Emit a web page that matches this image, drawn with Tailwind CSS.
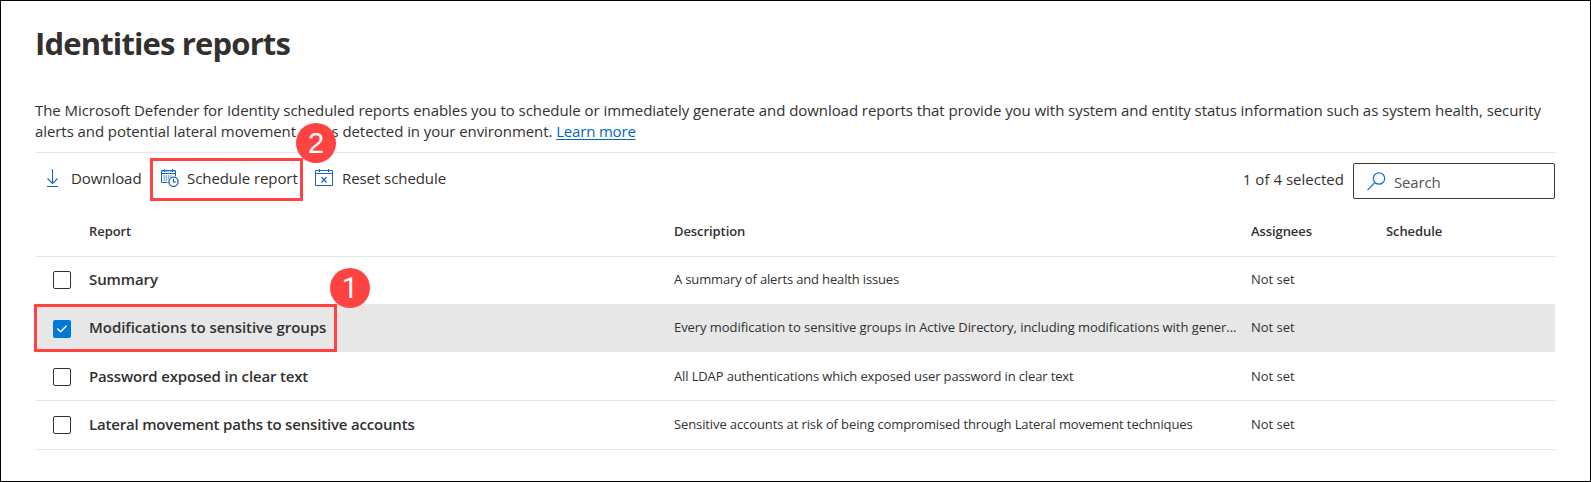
<!DOCTYPE html>
<html lang="en">
<head>
<meta charset="utf-8">
<title>Identities reports</title>
<script src="https://cdn.jsdelivr.net/npm/@tailwindcss/browser@4"></script>
</head>
<body class="bg-white">
<main class="relative h-[482px] w-[1591px] overflow-hidden border border-black bg-white pl-[34px] pr-[35px] font-['Open_Sans','Segoe_UI',sans-serif] text-[15px] text-[#323130]">
  <h1 class="pt-[21px] text-[31px] leading-[42px] font-bold tracking-[-0.85px] whitespace-nowrap">Identities reports</h1>
  <div class="pt-[36px] leading-[21px] whitespace-nowrap">
    <p class="tracking-[-0.058px]">The Microsoft Defender for Identity scheduled reports enables you to schedule or immediately generate and download reports that provide you with system and entity status information such as system health, security</p>
    <p class="tracking-[-0.075px]">alerts and potential lateral movement paths detected in your environment. <a class="tracking-[-0.18px] text-[#0067b8] underline underline-offset-2" href="#">Learn more</a></p>
  </div>

  <div class="mt-[10px] flex h-[63px] border-t border-[#e6e6e6] leading-[20px] tracking-[-0.07px] whitespace-nowrap">
    <button class="flex h-[20px] w-[116px] mt-[15px] items-center pl-[12px]">
      <svg class="h-[18px] w-[12px]" viewBox="0 0 12 18" fill="none" stroke="#1668bd" stroke-width="1.1"><path d="M5.5 0v14.5M.5 9.5l5 5 5-5"/><path d="M0 17.5h11" stroke-width="1"/></svg>
      <span class="ml-[12px]">Download</span>
    </button>
    <button class="flex h-[20px] w-[153px] mt-[15px] items-center pl-[10px]">
      <svg class="h-[18px] w-[18px]" viewBox="0 0 18 18" fill="none" stroke="#1f66b8" stroke-width="1"><path d="M6.5 13.5h-6v-12h14v6M.5 4.5h14M3.5 0v3M11.5 0v3"/><path d="M1 2.5h13" stroke-opacity=".4"/><path d="M2.5 7h9M2.5 9h6M2.5 11h4.500" stroke-dasharray="1.4 .8"/><circle cx="12.500" cy="12.800" r="4.600" fill="#fff" stroke-width="1.300"/><path d="M12.500 9.800v3.200h2.600" stroke-width="1.200"/></svg>
      <span class="ml-[8px]">Schedule report</span>
    </button>
    <button class="flex h-[20px] mt-[15px] items-center pl-[11px]">
      <svg class="h-[18px] w-[19px]" viewBox="0 0 19 18" fill="none" stroke="#1f66b8" stroke-width="1"><path d="M.5 1.500h17v15H.5zM.5 4.500h17M4.500 0v3M13.500 0v3"/><path d="M6.500 8l5 5.500M11.500 8l-5 5.500" stroke-width="1.200"/></svg>
      <span class="ml-[8px]">Reset schedule</span>
    </button>
    <span class="mt-[16px] ml-auto h-[20px] tracking-[0.02px]">1 of 4 selected</span>
    <div class="mt-[10px] ml-[9px] flex h-[36px] w-[202px] items-center rounded-[2px] border border-[#3b3a39] pl-[13px] text-[#555351]">
      <svg class="h-[19px] w-[19px]" viewBox="0 0 19 19" fill="none" stroke="#1573d1" stroke-width="1.200"><circle cx="12" cy="6.500" r="5.700"/><path d="M8 10.500l-7.500 7.700"/></svg>
      <span class="mt-[2px] ml-[8px] tracking-[-0.15px]">Search</span>
    </div>
  </div>

  <div class="text-[13px] whitespace-nowrap">
    <div class="flex h-[42px] border-b border-[#e6e6e6] pl-[54px] leading-[32px] font-semibold tracking-[-0.08px]">
      <span class="w-[585px]">Report</span><span class="w-[577px]">Description</span><span class="w-[135px]">Assignees</span><span>Schedule</span>
    </div>
    <div class="flex h-[48px] border-b border-[#e6e6e6] pl-[18px] leading-[45px]">
      <span class="mt-[14px] h-[18px] w-[18px] rounded-[2px] border border-[#323130]"></span>
      <span class="ml-[18px] w-[585px] text-[15px] font-semibold tracking-[-0.1px]">Summary</span><span class="w-[577px] tracking-[-0.15px]">A summary of alerts and health issues</span><span>Not set</span>
    </div>
    <div class="flex h-[47px] bg-[#e7e7e7] pl-[18px] leading-[45px]">
      <span class="mt-[15px] h-[18px] w-[18px] rounded-[2px] bg-[#0078d7]"><svg class="h-[18px] w-[18px]" viewBox="0 0 18 18" fill="none" stroke="#fff" stroke-width="1.500"><path d="M4.300 8.500l3.200 3.200 6-6"/></svg></span>
      <span class="ml-[18px] w-[585px] text-[15px] font-semibold tracking-[-0.05px]">Modifications to sensitive groups</span><span class="w-[577px] tracking-[-0.06px]">Every modification to sensitive groups in Active Directory, including modifications with gener...</span><span>Not set</span>
    </div>
    <div class="flex h-[49px] border-b border-[#e6e6e6] pl-[18px] leading-[48px]">
      <span class="mt-[16px] h-[18px] w-[18px] rounded-[2px] border border-[#323130]"></span>
      <span class="ml-[18px] w-[585px] text-[15px] font-semibold tracking-[-0.16px]">Password exposed in clear text</span><span class="w-[577px] tracking-[-0.13px]">All LDAP authentications which exposed user password in clear text</span><span>Not set</span>
    </div>
    <div class="flex h-[49px] border-b border-[#e6e6e6] pl-[18px] leading-[46px]">
      <span class="mt-[15px] h-[18px] w-[18px] rounded-[2px] border border-[#323130]"></span>
      <span class="ml-[18px] w-[585px] text-[15px] font-semibold tracking-[-0.18px]">Lateral movement paths to sensitive accounts</span><span class="w-[577px] tracking-[-0.11px]">Sensitive accounts at risk of being compromised through Lateral movement techniques</span><span>Not set</span>
    </div>
  </div>

  <!-- Callouts laid over the page -->
  <div class="absolute top-[157px] left-[149px] h-[43px] w-[153px] border-3 border-[#ff4343]"></div>
  <div class="absolute top-[303px] left-[33px] h-[48px] w-[303px] border-3 border-[#ff4343]"></div>
  <div class="absolute top-[122px] left-[295px] flex h-[40px] w-[40px] items-center justify-center rounded-full bg-[#ff4343] font-['Liberation_Sans',sans-serif] text-[29px] leading-[40px] text-white">2</div>
  <div class="absolute top-[267px] left-[329px] flex h-[40px] w-[40px] items-center justify-center rounded-full bg-[#ff4343] font-['Roboto',sans-serif] text-[29px] leading-[40px] text-white">1</div>
</main>
</body>
</html>
